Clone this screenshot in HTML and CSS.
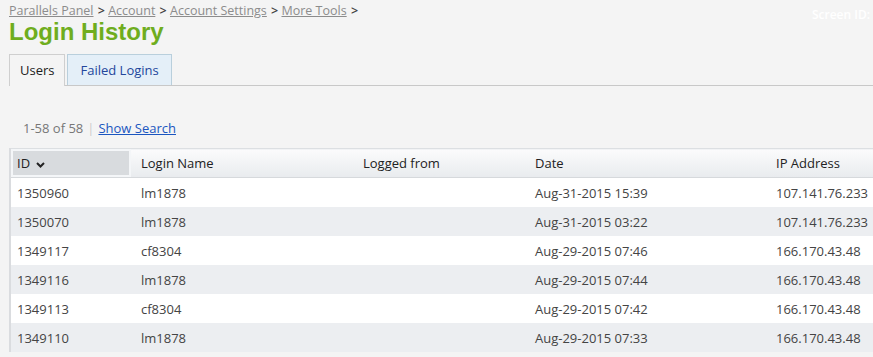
FILE: index.html
```html
<!DOCTYPE html>
<html lang="en">
<head>
    <meta charset="UTF-8">
    <title>Login History</title>
    <link rel="stylesheet" href="styles.css">
</head>
<body>
    <div class="page">
        <div class="topbar">
            <div class="breadcrumbs">
                <a href="#">Parallels Panel</a> &gt;
                <a href="#">Account</a> &gt;
                <a href="#">Account Settings</a> &gt;
                <a href="#">More Tools</a> &gt;
            </div>
            <div class="screen-id">Screen ID:</div>
        </div>
        <h1>Login History</h1>
        <ul class="tabs">
            <li class="tab active">Users</li>
            <li class="tab">Failed Logins</li>
        </ul>
        <div class="pager">
            <span class="count">1-58 of 58</span><span class="sep">|</span><a href="#">Show Search</a>
        </div>
        <table class="grid">
            <thead>
                <tr>
                    <th class="col-id sorted">ID <span class="caret"><svg width="9" height="6" viewBox="0 0 9 6"><path d="M1 1 L4.5 4.5 L8 1" fill="none" stroke="#222" stroke-width="2"/></svg></span></th>
                    <th class="col-login">Login Name</th>
                    <th class="col-from">Logged from</th>
                    <th class="col-date">Date</th>
                    <th class="col-ip">IP Address</th>
                </tr>
            </thead>
            <tbody>
                <tr><td>1350960</td><td>lm1878</td><td></td><td>Aug-31-2015 15:39</td><td>107.141.76.233</td></tr>
                <tr><td>1350070</td><td>lm1878</td><td></td><td>Aug-31-2015 03:22</td><td>107.141.76.233</td></tr>
                <tr><td>1349117</td><td>cf8304</td><td></td><td>Aug-29-2015 07:46</td><td>166.170.43.48</td></tr>
                <tr><td>1349116</td><td>lm1878</td><td></td><td>Aug-29-2015 07:44</td><td>166.170.43.48</td></tr>
                <tr><td>1349113</td><td>cf8304</td><td></td><td>Aug-29-2015 07:42</td><td>166.170.43.48</td></tr>
                <tr><td>1349110</td><td>lm1878</td><td></td><td>Aug-29-2015 07:33</td><td>166.170.43.48</td></tr>
            </tbody>
        </table>
    </div>
</body>
</html>
```

FILE: styles.css
```css
body {
    font-family: "Open Sans", sans-serif;
    background-color: #f4f4f4;
    color: #333;
    margin: 0;
    padding: 0;
    overflow: hidden;
}
.page {
    padding: 3px 0 0 9px;
}
.topbar {
    display: flex;
    justify-content: space-between;
    align-items: flex-start;
    height: 16px;
    font-size: 12.5px;
    line-height: 16px;
}
.breadcrumbs {
    color: #444;
    font-weight: 600;
}
.breadcrumbs a {
    color: #8c8c8c;
    font-weight: normal;
    margin-right: 1px;
}
.screen-id {
    color: #fff;
    font-weight: 600;
    font-size: 12px;
    padding: 4px 3px 0 0;
}
h1 {
    font-family: "Liberation Sans", Arial, sans-serif;
    font-size: 24px;
    line-height: 26px;
    color: #6fad1e;
    margin: 0 0 9px;
}
.tabs {
    display: flex;
    list-style: none;
    margin: 0;
    padding: 0;
    border-bottom: 1px solid #c8c8c8;
    height: 31px;
}
.tab {
    font-size: 13px;
    line-height: 30px;
    padding: 0 12px;
    margin-right: 2px;
    border: 1px solid #b9cfdc;
    border-bottom: none;
    background: #e4eff8;
    color: #23469c;
}
.tab.active {
    padding: 0 10px;
    background: #f4f4f4;
    color: #222;
    border-color: #cfcfcf;
    height: 31px;
}
.pager {
    font-size: 13px;
    line-height: 18px;
    margin: 33px 0 11px 14px;
    color: #777;
}
.pager .sep {
    color: #ccc;
    margin: 0 4px;
}
.pager a {
    color: #1b56c0;
}
.grid {
    border-collapse: collapse;
    font-size: 13px;
    width: 900px;
    border-left: 2px solid #dadcdf;
    border-top: 1px solid #dcdfe2;
}
.grid th,
.grid td {
    padding: 0 6px 0 10px;
}
.grid th:first-child,
.grid td:first-child {
    padding-left: 6px;
}
.grid th {
    text-align: left;
    font-weight: normal;
    color: #222;
    height: 28px;
    background: linear-gradient(#fbfbfc, #e8ebee);
    border-bottom: 1px solid #d6d9dc;
}
.grid th.sorted {
    background: #d8dbde;
    box-shadow: inset 0 0 0 2px #f4f6f8;
}
.caret {
    margin-left: 3px;
}
.col-id { width: 108px; }
.col-login { width: 206px; }
.col-from { width: 156px; }
.col-date { width: 225px; }
.grid td {
    height: 29px;
    color: #444;
}
.grid tbody tr:nth-child(odd) td {
    background: #fff;
}
.grid tbody tr:nth-child(even) td {
    background: #eceef1;
}
```
